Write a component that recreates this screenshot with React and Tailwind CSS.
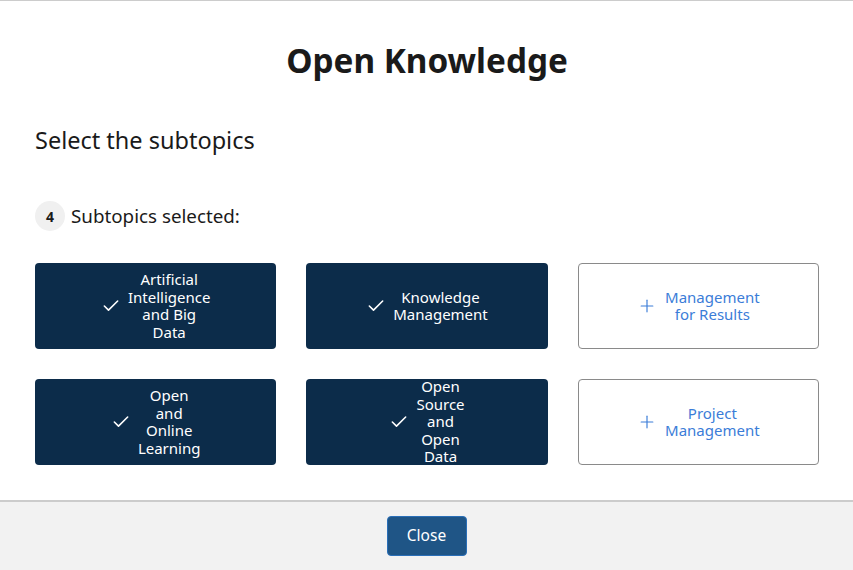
import { Check, Plus } from "lucide-react";

const selected = [
  ["Artificial", "Intelligence", "and Big", "Data"],
  ["Knowledge", "Management"],
  null,
  ["Open", "and", "Online", "Learning"],
  ["Open", "Source", "and", "Open", "Data"],
  null,
];

const unselected = {
  2: ["Management", "for Results"],
  5: ["Project", "Management"],
};

function Lines({ lines }) {
  return (
    <div className="text-center text-[15px] leading-[17.5px]">
      {lines.map((l, i) => (
        <div key={i}>{l}</div>
      ))}
    </div>
  );
}

function Card({ idx }) {
  const lines = selected[idx];
  if (lines) {
    return (
      <div className="h-[86px] rounded-[4px] bg-[#0c2c4a] text-white flex items-center justify-center gap-[7px]">
        <Check size={20} strokeWidth={1.9} />
        <Lines lines={lines} />
      </div>
    );
  }
  return (
    <div className="h-[86px] rounded-[4px] bg-white border border-[#8a8a8a] text-[#3b7dd8] flex items-center justify-center gap-[8px]">
      <Plus size={20} strokeWidth={1.4} />
      <Lines lines={unselected[idx]} />
    </div>
  );
}

export default function App() {
  return (
    <div
      className="w-[853px] h-[570px] flex flex-col bg-white text-[#1a1a1a] border-t border-[#cccccc]"
      style={{ fontFamily: '"Noto Sans", "Open Sans", sans-serif' }}
    >
      <div className="flex-1 pl-[35px] pr-[34px]">
        <h1 className="mt-[37px] text-center text-[33.3px] leading-[44px] font-bold">Open Knowledge</h1>
        <div className="mt-[42px] text-[23.5px] leading-[32px]">Select the subtopics</div>
        <div className="mt-[45px] flex items-center gap-[6px]">
          <div className="w-[30px] h-[30px] rounded-full bg-[#f0f0f0] flex items-center justify-center text-[14px] font-bold">
            4
          </div>
          <div className="text-[18.8px]">Subtopics selected:</div>
        </div>
        <div className="mt-[32px] grid grid-cols-3 gap-x-[30px] gap-y-[30px]">
          {[0, 1, 2, 3, 4, 5].map((i) => (
            <Card key={i} idx={i} />
          ))}
        </div>
      </div>
      <div className="h-[70px] shrink-0 border-t-2 border-[#cccccc] bg-[#f2f2f2] flex items-center justify-center">
        <button className="w-[80px] h-[40px] rounded-[4px] bg-[#1f5586] border border-[#2a6fb8] text-white text-[15.5px]">
          Close
        </button>
      </div>
    </div>
  );
}
